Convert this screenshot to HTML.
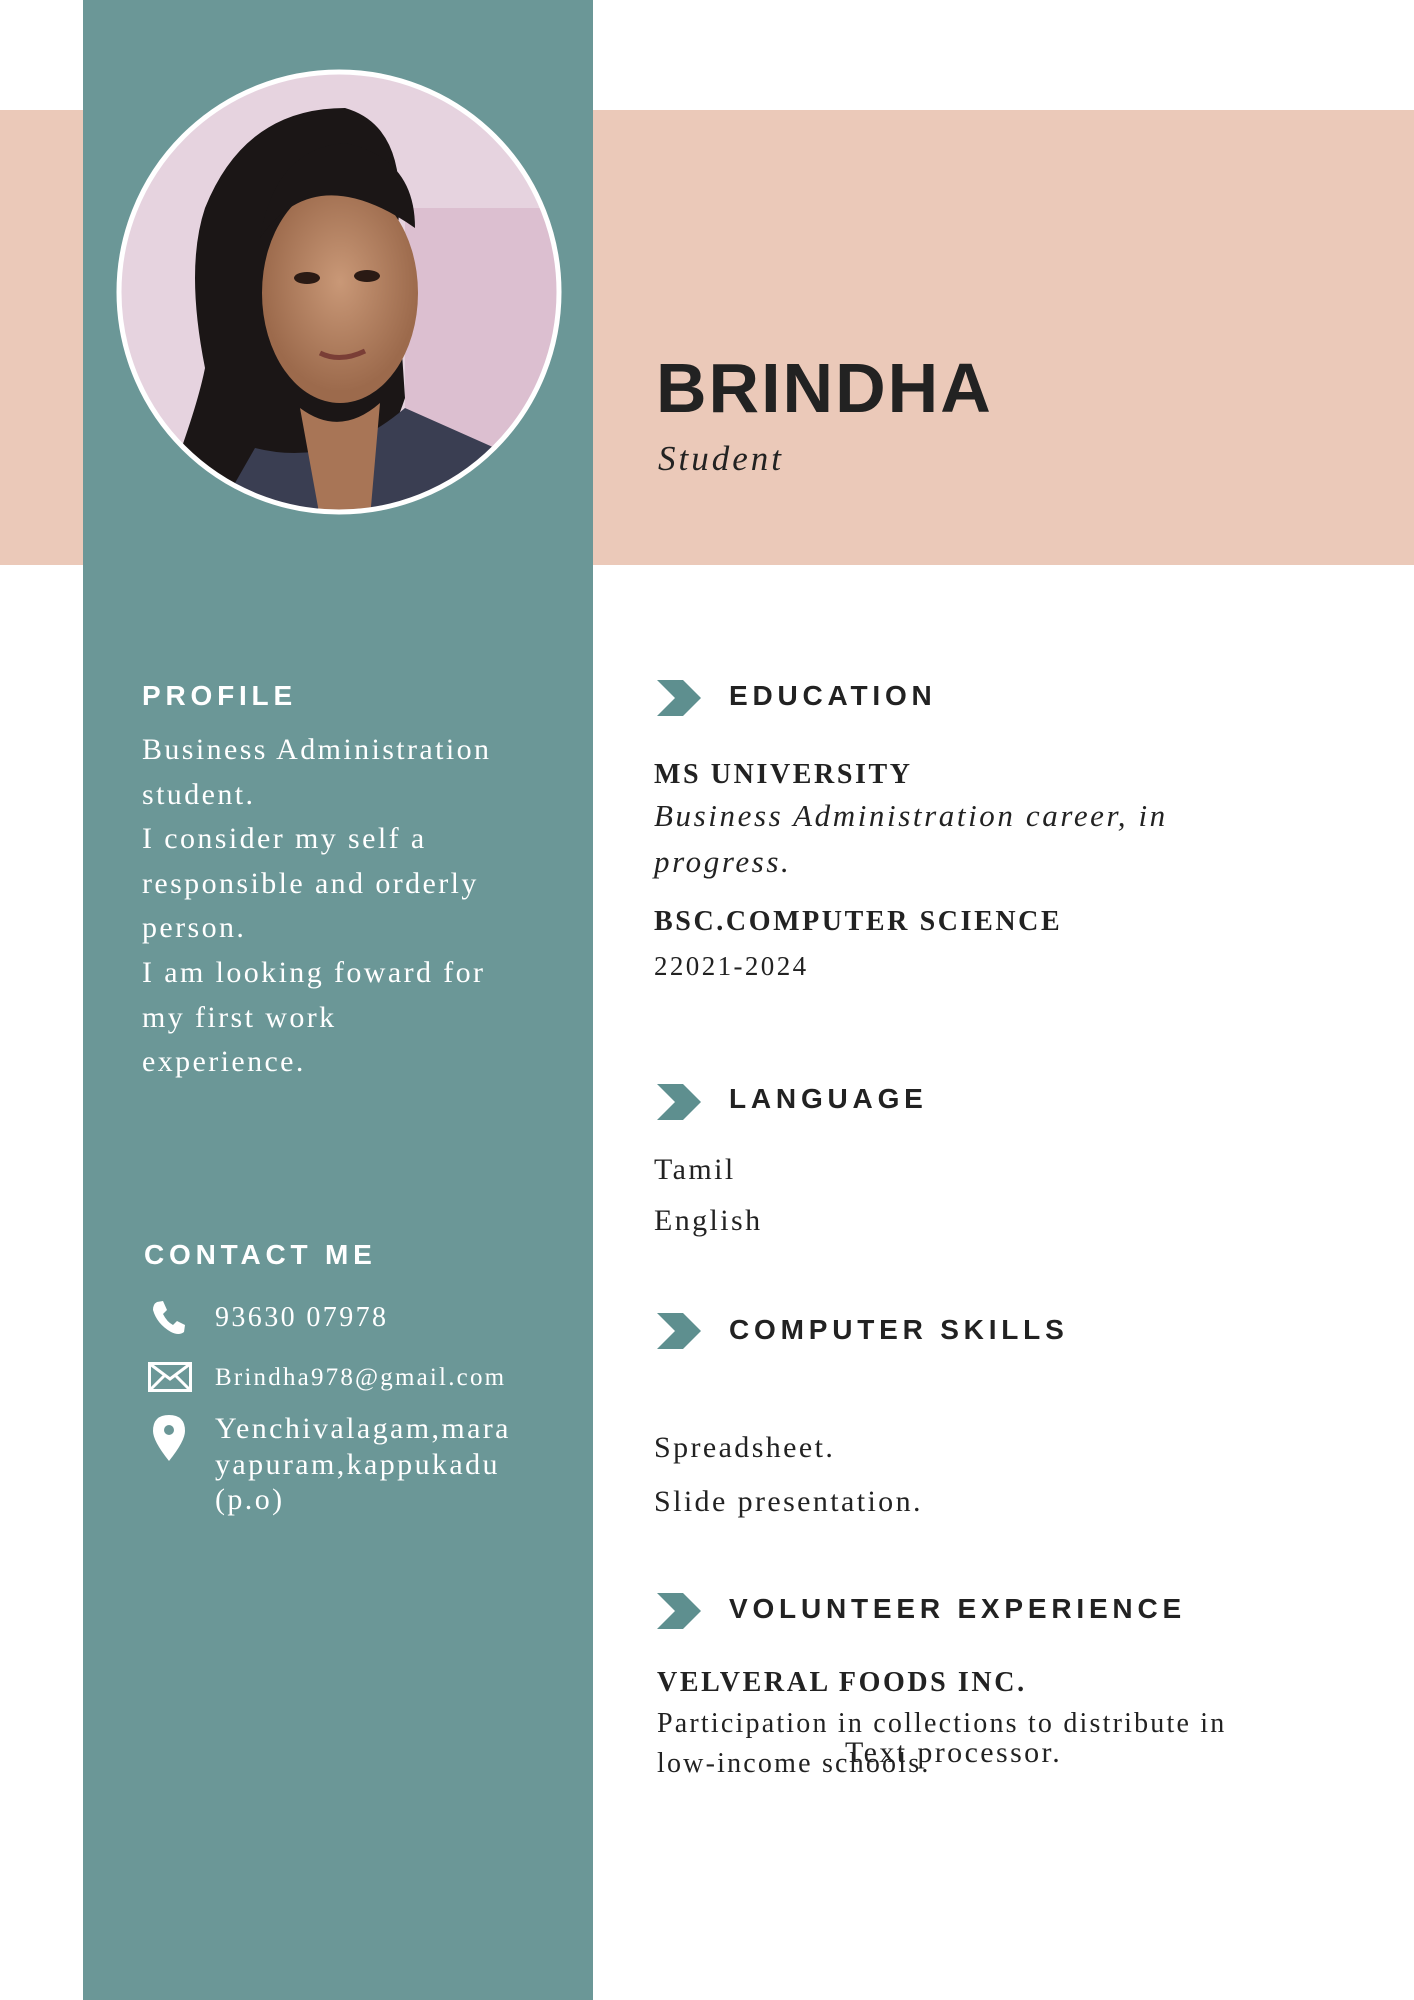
<!DOCTYPE html>
<html><head><meta charset="utf-8"><style>
body{margin:0;width:1414px;height:2000px;position:relative;background:#fff;overflow:hidden;font-family:"Liberation Serif",serif;}
.a{position:absolute;white-space:nowrap;}
.pink{left:0;top:110px;width:1414px;height:455px;background:#ebc9b9;}
.teal{left:83px;top:0;width:510px;height:2000px;background:#6b9797;}
.h{font-family:"Liberation Sans",sans-serif;font-weight:bold;font-size:28px;letter-spacing:4.8px;color:#222;line-height:34px;}
.w{color:#fff}
.s{font-size:30px;letter-spacing:2.4px;line-height:44.6px;color:#fff;}
.r{font-size:30px;letter-spacing:2.4px;color:#222;line-height:36px;}
.b{font-weight:bold;font-size:28px;letter-spacing:2.6px;color:#222;line-height:34px;}
.i{font-style:italic;font-size:31px;letter-spacing:2.6px;color:#222;line-height:46px;}
.chev{position:absolute;width:44px;height:36px;}
</style></head><body>
<div class="a pink"></div>
<div class="a teal"></div>
<svg class="a" style="left:115px;top:68px" width="450" height="450" viewBox="0 0 450 450">
<defs><clipPath id="c"><circle cx="224" cy="224" r="218"/></clipPath>
<radialGradient id="f" cx="0.5" cy="0.45" r="0.5"><stop offset="0" stop-color="#c99877"/><stop offset="1" stop-color="#9c6a4c"/></radialGradient></defs>
<g clip-path="url(#c)">
<rect width="450" height="450" fill="#e6d3df"/>
<rect x="290" y="140" width="160" height="310" fill="#dcbfd0"/>
<path d="M90 140 Q130 40 230 40 Q300 60 280 180 L290 330 Q260 420 200 450 L40 450 Q80 350 90 300 Q70 200 90 140Z" fill="#1b1616"/>
<ellipse cx="225" cy="225" rx="78" ry="110" fill="url(#f)"/>
<path d="M145 170 Q200 90 300 160 Q300 90 230 75 Q160 80 145 170Z" fill="#1b1616"/>
<ellipse cx="192" cy="210" rx="13" ry="6" fill="#2a1a14"/>
<ellipse cx="252" cy="208" rx="13" ry="6" fill="#2a1a14"/>
<path d="M205 285 Q225 295 250 283" stroke="#7a3e36" stroke-width="5" fill="none"/>
<path d="M140 380 Q220 400 290 340 L380 380 L400 450 L100 450Z" fill="#3a3e52"/>
<path d="M185 340 Q225 370 265 335 L255 450 L205 450Z" fill="#a87556"/>
</g>
<circle cx="224" cy="224" r="220" fill="none" stroke="#fff" stroke-width="5"/>
</svg>
<div class="a" style="left:656px;top:348px;font-family:'Liberation Sans',sans-serif;font-weight:bold;font-size:70px;letter-spacing:2px;color:#222;line-height:80px;">BRINDHA</div>
<div class="a" style="left:658px;top:438px;font-style:italic;font-size:35px;letter-spacing:3px;color:#222;line-height:42px;">Student</div>

<div class="a h w" style="left:142px;top:679px;">PROFILE</div>
<div class="a s" style="left:142px;top:728px;">Business Administration<br>student.<br>I consider my self a<br>responsible and orderly<br>person.<br>I am looking foward for<br>my first work<br>experience.</div>

<div class="a h w" style="left:144px;top:1238px;">CONTACT ME</div>
<svg class="a" style="left:151px;top:1300px" width="36" height="36" viewBox="0 0 36 36"><path d="M6 2 L12 1 L16 10 L12 14 Q16 22 22 25 L26 21 L34 25 L33 32 Q28 36 20 32 Q6 24 2 10 Q2 4 6 2Z" fill="#fff"/></svg>
<div class="a s" style="left:215px;top:1296px;font-size:28px;">93630 07978</div>
<svg class="a" style="left:148px;top:1362px" width="44" height="30" viewBox="0 0 44 30"><rect x="1.5" y="1.5" width="41" height="27" fill="none" stroke="#fff" stroke-width="3"/><path d="M2 2 L22 17 L42 2" fill="none" stroke="#fff" stroke-width="3"/><path d="M2 28 L16 14 M42 28 L28 14" stroke="#fff" stroke-width="3"/></svg>
<div class="a s" style="left:215px;top:1356px;font-size:25px;letter-spacing:2.2px;">Brindha978@gmail.com</div>
<svg class="a" style="left:153px;top:1415px" width="32" height="46" viewBox="0 0 32 46"><path d="M16 0 Q32 0 32 16 Q32 26 16 46 Q0 26 0 16 Q0 0 16 0Z" fill="#fff"/><circle cx="16" cy="15" r="5" fill="#6b9797"/></svg>
<div class="a s" style="left:215px;top:1411px;line-height:35.5px;">Yenchivalagam,mara<br>yapuram,kappukadu<br>(p.o)</div>

<svg class="chev" style="left:657px;top:680px" viewBox="0 0 44 36"><path d="M0 0 H26 L44 18 L26 36 H0 L18 18Z" fill="#5e8f8f"/></svg>
<div class="a h" style="left:729px;top:679px;">EDUCATION</div>
<div class="a b" style="left:654px;top:758px;">MS UNIVERSITY</div>
<div class="a i" style="left:654px;top:793px;">Business Administration career, in<br>progress.</div>
<div class="a b" style="left:654px;top:905px;">BSC.COMPUTER SCIENCE</div>
<div class="a r" style="left:654px;top:948px;font-size:27px;">22021-2024</div>

<svg class="chev" style="left:657px;top:1084px" viewBox="0 0 44 36"><path d="M0 0 H26 L44 18 L26 36 H0 L18 18Z" fill="#5e8f8f"/></svg>
<div class="a h" style="left:729px;top:1082px;">LANGUAGE</div>
<div class="a r" style="left:654px;top:1152px;">Tamil</div>
<div class="a r" style="left:654px;top:1203px;">English</div>

<svg class="chev" style="left:657px;top:1313px" viewBox="0 0 44 36"><path d="M0 0 H26 L44 18 L26 36 H0 L18 18Z" fill="#5e8f8f"/></svg>
<div class="a h" style="left:729px;top:1313px;">COMPUTER SKILLS</div>
<div class="a r" style="left:654px;top:1430px;">Spreadsheet.</div>
<div class="a r" style="left:654px;top:1484px;">Slide presentation.</div>

<svg class="chev" style="left:657px;top:1593px" viewBox="0 0 44 36"><path d="M0 0 H26 L44 18 L26 36 H0 L18 18Z" fill="#5e8f8f"/></svg>
<div class="a h" style="left:729px;top:1592px;">VOLUNTEER EXPERIENCE</div>
<div class="a b" style="left:657px;top:1666px;">VELVERAL FOODS INC.</div>
<div class="a r" style="left:657px;top:1704px;font-size:28px;letter-spacing:2.2px;line-height:40px;">Participation in collections to distribute in<br>low-income schools.</div>
<div class="a r" style="left:845px;top:1735px;">Text processor.</div>
</body></html>
